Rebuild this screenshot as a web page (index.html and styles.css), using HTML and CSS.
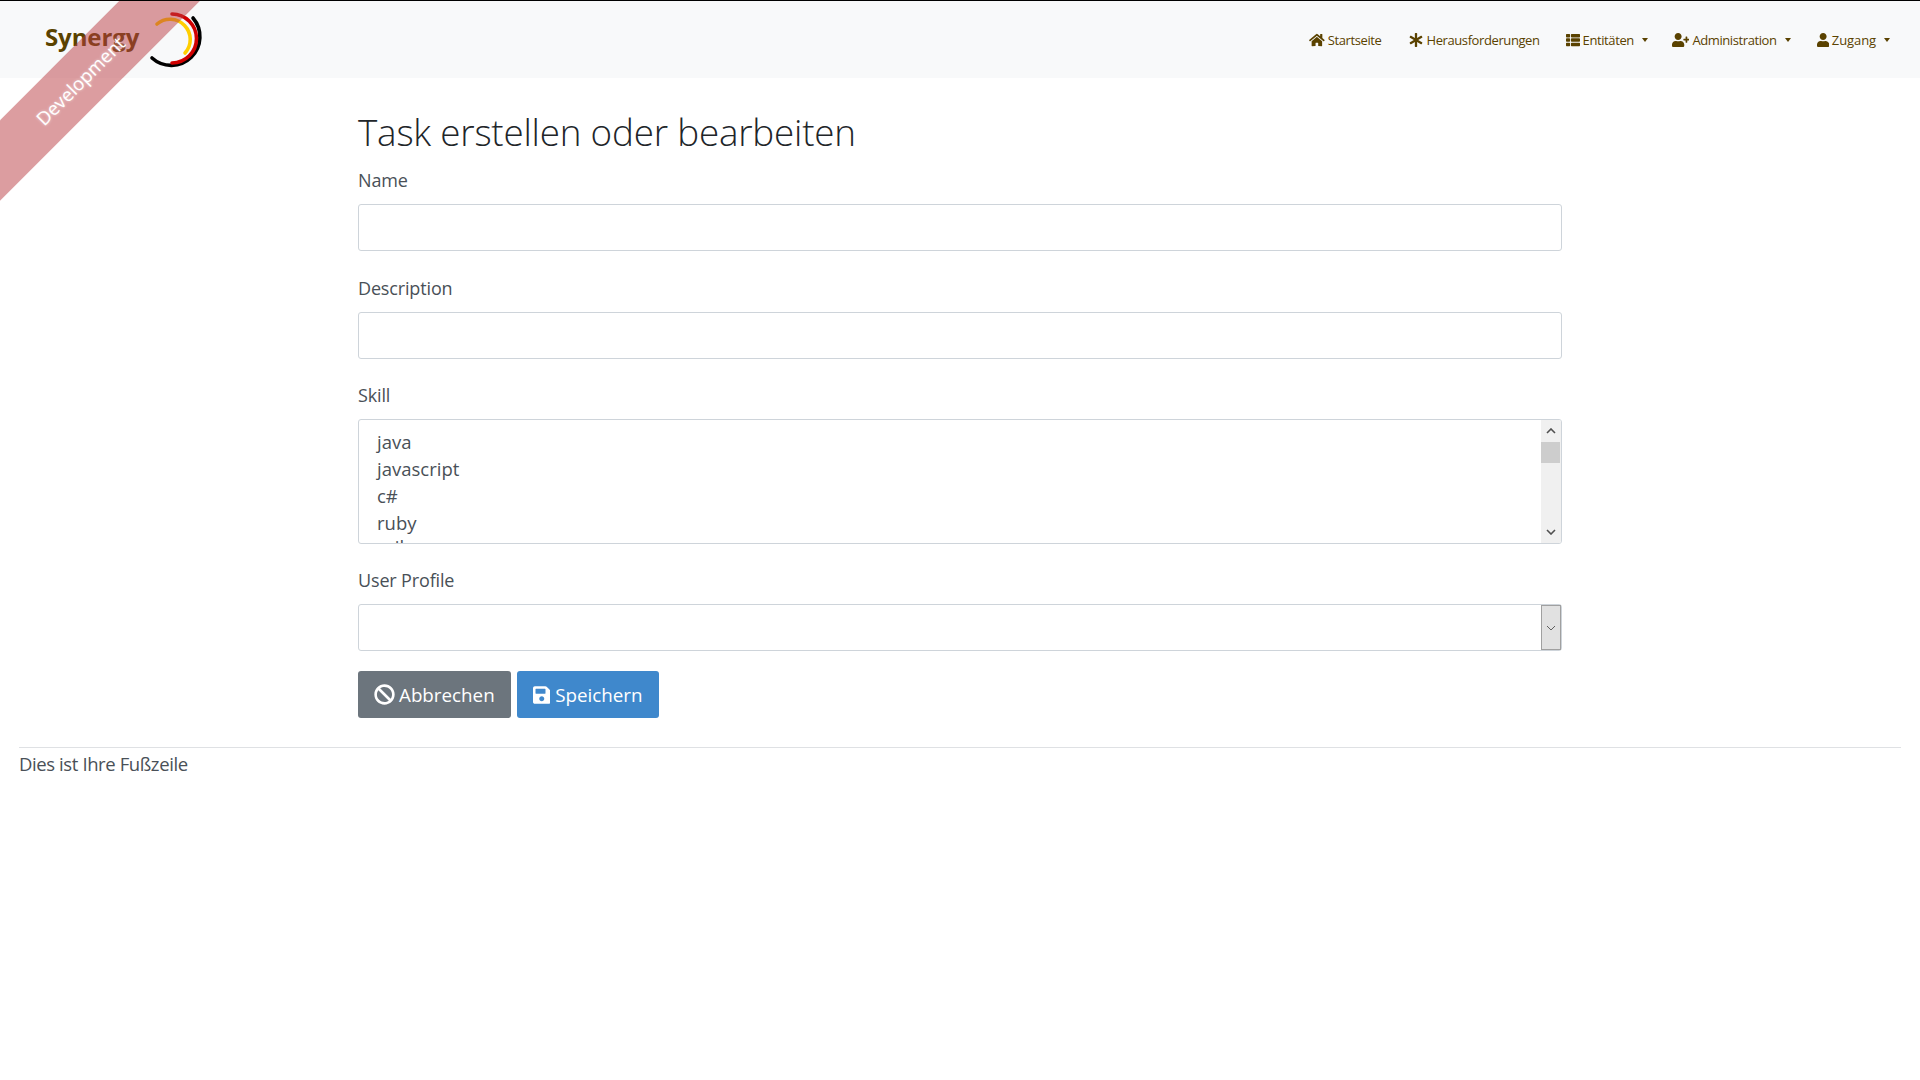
FILE: index.html
```html
<!DOCTYPE html>
<html lang="de">
<head>
<meta charset="utf-8">
<title>Task erstellen oder bearbeiten</title>
<link rel="stylesheet" href="styles.css">
</head>
<body>
<nav class="navbar">
  <a class="brand" href="#">
    <span class="brand-text">Synergy</span>
    <svg class="brand-ring" viewBox="0 0 60 60" width="60" height="60">
      <path class="ring ring-black" d="M47 9 A28.7 28.7 0 0 1 6 49"/>
      <path class="ring ring-gold" d="M11 15 A20.2 20.2 0 0 1 39 44"/>
      <path class="ring ring-red" d="M26 5 A24.5 24.5 0 0 1 26 54"/>
    </svg>
  </a>
  <ul class="nav">
    <li class="nav-item"><svg class="ico" viewBox="0 0 576 512"><path d="M280.37 148.26L96 300.11V464a16 16 0 0 0 16 16l112.06-.29a16 16 0 0 0 15.92-16V368a16 16 0 0 1 16-16h64a16 16 0 0 1 16 16v95.64a16 16 0 0 0 16 16.05L464 480a16 16 0 0 0 16-16V300L295.67 148.26a12.19 12.19 0 0 0-15.3 0zM571.6 251.47L488 182.56V44.05a12 12 0 0 0-12-12h-56a12 12 0 0 0-12 12v72.61L318.47 43a48 48 0 0 0-61 0L4.34 251.47a12 12 0 0 0-1.6 16.9l25.5 31A12 12 0 0 0 45.15 301l235.22-193.74a12.19 12.19 0 0 1 15.3 0L530.9 301a12 12 0 0 0 16.9-1.6l25.5-31a12 12 0 0 0-1.7-16.93z"/></svg><span>Startseite</span></li>
    <li class="nav-item nav-item-wide"><svg class="ico" viewBox="0 0 512 512"><path d="M478.21 334.093L336 256l142.21-78.093c11.795-6.477 15.961-21.384 9.232-33.037l-19.48-33.741c-6.728-11.653-21.72-15.499-33.227-8.523L296 186.718l3.475-162.204C299.763 11.061 288.937 0 275.48 0h-38.96c-13.456 0-24.283 11.061-23.994 24.514L216 186.718 77.265 102.607c-11.506-6.976-26.499-3.13-33.227 8.523l-19.48 33.741c-6.728 11.653-2.562 26.56 9.233 33.037L176 256 33.79 334.093c-11.795 6.477-15.961 21.384-9.232 33.037l19.48 33.741c6.728 11.653 21.721 15.499 33.227 8.523L216 325.282l-3.475 162.204C212.237 500.939 223.064 512 236.52 512h38.961c13.456 0 24.283-11.061 23.995-24.514L296 325.282l138.735 84.111c11.506 6.976 26.499 3.13 33.227-8.523l19.48-33.741c6.728-11.653 2.563-26.559-9.232-33.036z"/></svg><span>Herausforderungen</span></li>
    <li class="nav-item"><svg class="ico" viewBox="0 0 512 512"><path d="M149.333 216v80c0 13.255-10.745 24-24 24H24c-13.255 0-24-10.745-24-24v-80c0-13.255 10.745-24 24-24h101.333c13.255 0 24 10.745 24 24zM0 376v80c0 13.255 10.745 24 24 24h101.333c13.255 0 24-10.745 24-24v-80c0-13.255-10.745-24-24-24H24c-13.255 0-24 10.745-24 24zM125.333 32H24C10.745 32 0 42.745 0 56v80c0 13.255 10.745 24 24 24h101.333c13.255 0 24-10.745 24-24V56c0-13.255-10.745-24-24-24zm80 448H488c13.255 0 24-10.745 24-24v-80c0-13.255-10.745-24-24-24H205.333c-13.255 0-24 10.745-24 24v80c0 13.255 10.745 24 24 24zm-24-424v80c0 13.255 10.745 24 24 24H488c13.255 0 24-10.745 24-24V56c0-13.255-10.745-24-24-24H205.333c-13.255 0-24 10.745-24 24zm24 264H488c13.255 0 24-10.745 24-24v-80c0-13.255-10.745-24-24-24H205.333c-13.255 0-24 10.745-24 24v80c0 13.255 10.745 24 24 24z"/></svg><span>Entitäten</span><i class="caret"></i></li>
    <li class="nav-item nav-item-tight"><svg class="ico" viewBox="0 0 640 512"><path d="M624 208h-64v-64c0-8.8-7.2-16-16-16h-32c-8.8 0-16 7.2-16 16v64h-64c-8.8 0-16 7.2-16 16v32c0 8.8 7.2 16 16 16h64v64c0 8.8 7.2 16 16 16h32c8.8 0 16-7.2 16-16v-64h64c8.8 0 16-7.2 16-16v-32c0-8.8-7.2-16-16-16zm-400 48c70.7 0 128-57.3 128-128S294.7 0 224 0 96 57.3 96 128s57.3 128 128 128zm89.6 32h-16.7c-22.2 10.2-46.9 16-72.9 16s-50.6-5.8-72.9-16h-16.7C60.2 288 0 348.2 0 422.4V464c0 26.5 21.5 48 48 48h352c26.5 0 48-21.5 48-48v-41.6c0-74.2-60.2-134.4-134.4-134.4z"/></svg><span>Administration</span><i class="caret"></i></li>
    <li class="nav-item nav-item-open"><svg class="ico" viewBox="0 0 448 512"><path d="M224 256c70.7 0 128-57.3 128-128S294.7 0 224 0 96 57.3 96 128s57.3 128 128 128zm89.6 32h-16.7c-22.2 10.2-46.9 16-72.9 16s-50.6-5.8-72.9-16h-16.7C60.2 288 0 348.2 0 422.4V464c0 26.5 21.5 48 48 48h352c26.5 0 48-21.5 48-48v-41.6c0-74.2-60.2-134.4-134.4-134.4z"/></svg><span>Zugang</span><i class="caret"></i></li>
  </ul>
</nav>
<div class="ribbon-clip"><div class="ribbon">Development</div></div>
<main class="page">
  <h1 class="title">Task erstellen oder bearbeiten</h1>
  <form class="form">
    <div class="field field-first">
      <label class="label" for="name">Name</label>
      <input class="control" id="name" type="text">
    </div>
    <div class="field">
      <label class="label" for="description">Description</label>
      <input class="control" id="description" type="text">
    </div>
    <div class="field">
      <span class="label">Skill</span>
      <div class="listbox" role="listbox">
        <div class="options">
          <div class="option">java</div>
          <div class="option">javascript</div>
          <div class="option">c#</div>
          <div class="option">ruby</div>
          <div class="option option-partial">rails</div>
        </div>
        <div class="scrollbar">
          <svg class="sb-arrow" viewBox="0 0 10 6"><path d="M1 5 L5 1 L9 5"/></svg>
          <div class="sb-track"><div class="sb-thumb"></div></div>
          <svg class="sb-arrow" viewBox="0 0 10 6"><path d="M1 1 L5 5 L9 1"/></svg>
        </div>
      </div>
    </div>
    <div class="field">
      <label class="label" for="profile">User Profile</label>
      <div class="select-wrap">
        <select class="control select" id="profile"><option></option></select>
        <div class="select-btn"><svg class="select-chev" viewBox="0 0 10 6"><path d="M1 1 L5 5 L9 1"/></svg></div>
      </div>
    </div>
    <div class="actions">
      <button class="btn btn-grey" type="button"><svg class="btn-ico ban" viewBox="0 0 512 512"><path d="M256 8C119.034 8 8 119.033 8 256s111.034 248 248 248 248-111.034 248-248S392.967 8 256 8zm130.108 117.892c65.448 65.448 70 165.481 20.677 235.637L150.47 105.216c70.204-49.356 170.226-44.735 235.638 20.676zM125.892 386.108c-65.448-65.448-70-165.481-20.677-235.637L361.53 406.784c-70.203 49.356-170.226 44.736-235.638-20.676z"/></svg>Abbrechen</button>
      <button class="btn btn-blue" type="button"><svg class="btn-ico" viewBox="0 0 448 512"><path d="M433.941 129.941l-83.882-83.882A48 48 0 0 0 316.118 32H48C21.49 32 0 53.49 0 80v352c0 26.51 21.49 48 48 48h352c26.51 0 48-21.49 48-48V163.882a48 48 0 0 0-14.059-33.941zM224 416c-35.346 0-64-28.654-64-64 0-35.346 28.654-64 64-64s64 28.654 64 64c0 35.346-28.654 64-64 64zm96-304.52V212c0 6.627-5.373 12-12 12H76c-6.627 0-12-5.373-12-12V108c0-6.627 5.373-12 12-12h228.52c3.183 0 6.235 1.264 8.485 3.515l3.48 3.48A11.996 11.996 0 0 1 320 111.48z"/></svg>Speichern</button>
    </div>
  </form>
</main>
<footer class="footer">Dies ist Ihre Fußzeile</footer>
</body>
</html>
```
FILE: styles.css
```css
* { box-sizing: border-box; }
html, body { margin: 0; height: 100%; }
body {
  font-family: "Open Sans", "Noto Sans", sans-serif;
  font-size: 19px;
  color: #495057;
  background: #fff;
  overflow: hidden;
  position: relative;
}
.navbar {
  height: 78px;
  border-top: 1px solid #000;
  background: #f8f9fa;
  display: flex;
  align-items: flex-start;
  justify-content: space-between;
  padding: 0 30px 0 45px;
}
.brand { display: flex; align-items: flex-start; text-decoration: none; }
.brand-text {
  font-size: 24px;
  font-weight: 700;
  letter-spacing: -.1px;
  color: #5a4200;
  margin-top: 19px;
  line-height: 34px;
}
.brand-ring { margin: 8px 0 0 7px; }
.ring { fill: none; stroke-width: 3.6; stroke-linecap: round; }
.ring-black { stroke: #000; }
.ring-red { stroke: #d00000; }
.ring-gold { stroke: #ffce00; }
.nav { list-style: none; margin: 30px 0 0; padding: 0; display: flex; }
.nav-item {
  display: flex;
  align-items: center;
  font-size: 13px;
  line-height: 18px;
  letter-spacing: -.4px;
  color: #5a4200;
  margin-left: 26px;
}
.nav-item-wide { margin-left: 28px; }
.nav-item-tight { margin-left: 24px; }
.nav-item-open { letter-spacing: -.1px; }
.ico { height: 14px; width: auto; fill: #5a4200; margin-right: 3px; }
.caret {
  border-top: 4px solid #5a4200;
  border-left: 3.5px solid transparent;
  border-right: 3.5px solid transparent;
  margin-left: 8px;
}
.ribbon-clip {
  position: absolute;
  left: 0;
  top: 1px;
  width: 300px;
  height: 300px;
  overflow: hidden;
  pointer-events: none;
}
.ribbon {
  position: absolute;
  left: -70.5px;
  top: 50.5px;
  width: 300px;
  height: 57px;
  line-height: 57px;
  text-align: center;
  transform: rotate(-45deg);
  background: rgba(185, 60, 65, .5);
  color: #fff;
  font-size: 18.5px;
  text-shadow: 0 0 3px rgba(255, 255, 255, .6);
}
.page { width: 1204px; margin: 0 0 0 358px; }
.title {
  margin: 0 0 5px;
  padding-top: 26px;
  font-size: 36.8px;
  line-height: 57px;
  font-weight: 300;
  color: #212529;
  letter-spacing: -.2px;
}
.field { margin-bottom: 22px; }
.field-first { margin-bottom: 23px; }
.label { display: block; line-height: 29px; margin-bottom: 9px; color: #495057; font-size: 18px; letter-spacing: -.15px; }
.control {
  display: block;
  width: 100%;
  height: 47px;
  border: 1px solid #ced4da;
  border-radius: 3px;
  background: #fff;
  font: inherit;
  color: #495057;
  outline: none;
}
.listbox {
  display: flex;
  height: 125px;
  border: 1px solid #ced4da;
  border-radius: 3px;
  overflow: hidden;
}
.options { flex: 1; padding: 8px 18px 0; overflow: hidden; }
.option { height: 27px; line-height: 27px; font-size: 18.5px; }
.option-partial { margin-top: -3px; }
.scrollbar { width: 20px; background: #f0f0f0; display: flex; flex-direction: column; align-items: stretch; padding-right: 1px; }
.sb-arrow { width: 10px; height: 6px; margin: 8px auto; fill: none; stroke: #505050; stroke-width: 1.6; flex: none; }
.sb-track { flex: 1; }
.sb-thumb { height: 21px; background: #cdcdcd; }
.select-wrap { position: relative; }
.select { appearance: none; -webkit-appearance: none; }
.select-btn {
  position: absolute;
  right: 1px;
  top: 1px;
  bottom: 1px;
  width: 20px;
  background: #e1e1e1;
  border: 1px solid #a0a0a0;
  display: flex;
  align-items: center;
  justify-content: center;
}
.select-chev { width: 10px; height: 6px; fill: none; stroke: #606060; stroke-width: 1; }
.actions { display: flex; gap: 6px; margin-top: -2px; }
.btn {
  display: flex;
  align-items: center;
  height: 47px;
  padding: 0 16px;
  border: 0;
  border-radius: 3px;
  color: #fff;
  font: inherit;
  font-size: 18.8px;
}
.btn-grey { background: #6c757d; }
.btn-blue { background: #3f88cc; }
.btn-ico { height: 20px; width: auto; fill: #fff; margin-right: 5px; }
.ban { height: 21px; margin-right: 4px; }
.footer {
  margin: 29px 19px 0;
  border-top: 1px solid #dfe1e4;
  padding-top: 1px;
  line-height: 29px;
  font-size: 18.5px;
  letter-spacing: -.4px;
  color: #495057;
}
```
